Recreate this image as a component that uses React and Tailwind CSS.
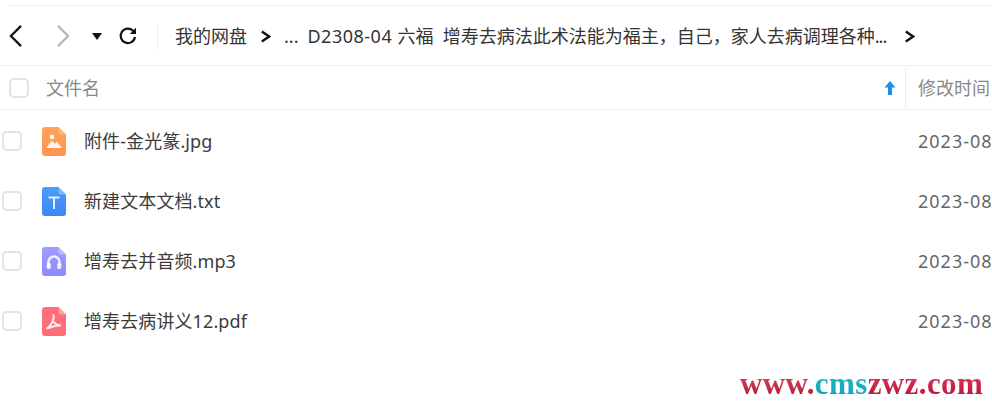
const sans = 'font-["Noto_Sans","Noto_Sans_CJK_SC",sans-serif]';

function Chevron({ dir = "right", className = "" }) {
  return (
    <svg viewBox="0 0 16 26" className={className} fill="none" stroke="currentColor" strokeWidth="2.4">
      <path d={dir === "left" ? "M14 2 3 13l11 11" : "M2 2l11 11L2 24"} />
    </svg>
  );
}

function Small() {
  return (
    <svg viewBox="0 0 12 14" className="w-[11px] h-[13px] text-[#111]" fill="none" stroke="currentColor" strokeWidth="2.6">
      <path d="M2 1.500 10 7 2 12.500" />
    </svg>
  );
}

function FileIcon({ from, to, children, fold }) {
  return (
    <svg viewBox="0 0 24 29" className="w-[24px] h-[29px] shrink-0 block">
      <defs>
        <linearGradient id={from.slice(1)} x1="0" y1="0" x2="0" y2="1">
          <stop offset="0" stopColor={from} />
          <stop offset="1" stopColor={to} />
        </linearGradient>
      </defs>
      <path d="M3 0h13.500L24 7.500V26a3 3 0 0 1-3 3H3a3 3 0 0 1-3-3V3a3 3 0 0 1 3-3z" fill={`url(#${from.slice(1)})`} />
      <path d="M16.500 0 24 7.500h-5a2.500 2.500 0 0 1-2.500-2.500z" fill={fold} />
      {children}
    </svg>
  );
}

const files = [
  {
    name: "附件-金光篆.jpg",
    icon: (
      <FileIcon from="#ffa25a" to="#ff9450" fold="#ffb57f">
        <circle cx="10" cy="10" r="2.200" fill="#fff" />
        <path d="M4 21 10 13.500l2.800 3.200 2.200-2 5 6.300z" fill="#fff" fillOpacity="0.9" />
      </FileIcon>
    ),
  },
  {
    name: "新建文本文档.txt",
    icon: (
      <FileIcon from="#4a9dfa" to="#3d85f5" fold="#7db8fb">
        <path d="M6.500 9.500h11v1.900h-4.500V22h-2V11.400H6.500z" fill="#e8f2ff" />
      </FileIcon>
    ),
  },
  {
    name: "增寿去并音频.mp3",
    icon: (
      <FileIcon from="#a09cff" to="#8a8cff" fold="#bdb9ff">
        <path d="M6.500 19v-4a5.500 5.500 0 0 1 11 0v4" fill="none" stroke="#fff" strokeOpacity="0.85" strokeWidth="2.600" />
        <rect x="4.800" y="16" width="4" height="6" rx="1.600" fill="#fff" fillOpacity="0.85" />
        <rect x="15.200" y="16" width="4" height="6" rx="1.600" fill="#fff" fillOpacity="0.85" />
      </FileIcon>
    ),
  },
  {
    name: "增寿去病讲义12.pdf",
    icon: (
      <FileIcon from="#ff6f76" to="#ff6c78" fold="#ff9ea3">
        <path d="M11.500 8c1 4.500-2 10-6.500 13.500M11 14c1.500 2.700 4 4.200 8 4.500-4 0-8.500.7-12 2.500" fill="none" stroke="#fff" strokeOpacity="0.85" strokeWidth="2" strokeLinecap="round" />
      </FileIcon>
    ),
  },
];

function Box({ className = "" }) {
  return <span className={`block w-[20px] h-[20px] rounded-[5px] border-2 border-[#e3e3e5] bg-white shrink-0 ${className}`} />;
}

function Row({ file }) {
  return (
    <div className="flex items-center h-[60px]">
      <Box className="ml-[2px]" />
      <span className="ml-[20px]">{file.icon}</span>
      <span className="ml-[18px] flex-1 text-[18px] tracking-[0.1px] text-[#3b3b3b] whitespace-nowrap">{file.name}</span>
      <span className="w-[74px] shrink-0 whitespace-nowrap text-[18px] tracking-[1px] text-[#666]">2023-08</span>
    </div>
  );
}

export default function App() {
  return (
    <div className={`relative w-[992px] h-[404px] bg-white overflow-hidden ${sans}`}>
      <div className="h-[6px] ml-[8px] border-b border-[#eeeeee]" />
      <div className="flex items-center h-[60px] border-b border-[#eeeeee] pt-[1px]">
        <Chevron dir="left" className="ml-[8px] w-[15px] h-[24px] text-[#111]" />
        <Chevron className="ml-[33px] w-[15px] h-[24px] text-[#b5b5b5]" />
        <span className="ml-[21px] w-0 h-0 border-x-[5px] border-x-transparent border-t-[7px] border-t-[#111]" />
        <svg viewBox="0 0 20 20" className="ml-[16px] w-[20px] h-[20px] text-[#111]" fill="none" stroke="currentColor" strokeWidth="2.200">
          <path d="M17 11a7.200 7.200 0 1 1-2-6.200L17 7" />
          <path d="M18 1.800V8h-6.200z" fill="currentColor" stroke="none" />
        </svg>
        <span className="ml-[19px] w-px h-[25px] bg-[#eeeeee]" />
        <span className="ml-[17px] text-[18px] text-[#333] whitespace-nowrap">我的网盘</span>
        <span className="ml-[13px]"><Small /></span>
        <span className="ml-[13px] text-[18px] text-[#333]">...</span>
        <span className="ml-[9px] w-[588px] text-[18px] text-[#333] whitespace-pre overflow-hidden">
          <span className="tracking-[0.5px]">D2308-04 </span>六福  增寿去病法此术法能为福主，自己，家人去病调理各种<span className="tracking-[-1px]">...</span>
        </span>
        <span className="ml-[9px]"><Small /></span>
      </div>
      <div className="flex items-center h-[44px] border-b border-[#eeeeee] pt-[1px]">
        <Box className="ml-[9px]" />
        <span className="ml-[17px] flex-1 text-[18px] text-[#888] whitespace-nowrap">文件名</span>
        <svg viewBox="0 0 12 14" className="w-[12px] h-[14px] mr-[9px]">
          <path d="M6 0 11.500 6.500H8V14H4V6.500H.5z" fill="#1a91e8" />
        </svg>
        <span className="w-[87px] h-full shrink-0 border-l border-[#eeeeee] pl-[12px] flex items-center text-[18px] text-[#888] whitespace-nowrap">修改时间</span>
      </div>
      <div className="pt-[1px]">
        {files.map((f) => <Row key={f.name} file={f} />)}
      </div>
      <div className='absolute left-[740px] top-[369px] font-["Liberation_Serif",serif] font-bold text-[31px] leading-[30px] tracking-[0.4px] whitespace-nowrap'>
        <span className="bg-gradient-to-b from-[#e8506a] to-[#a8102c] bg-clip-text text-transparent">www.</span>
        <span className="bg-gradient-to-b from-[#20c0c8] to-[#10a0b8] bg-clip-text text-transparent">cms</span>
        <span className="bg-gradient-to-b from-[#e8406a] to-[#b00c30] bg-clip-text text-transparent">zwz.com</span>
      </div>
    </div>
  );
}
